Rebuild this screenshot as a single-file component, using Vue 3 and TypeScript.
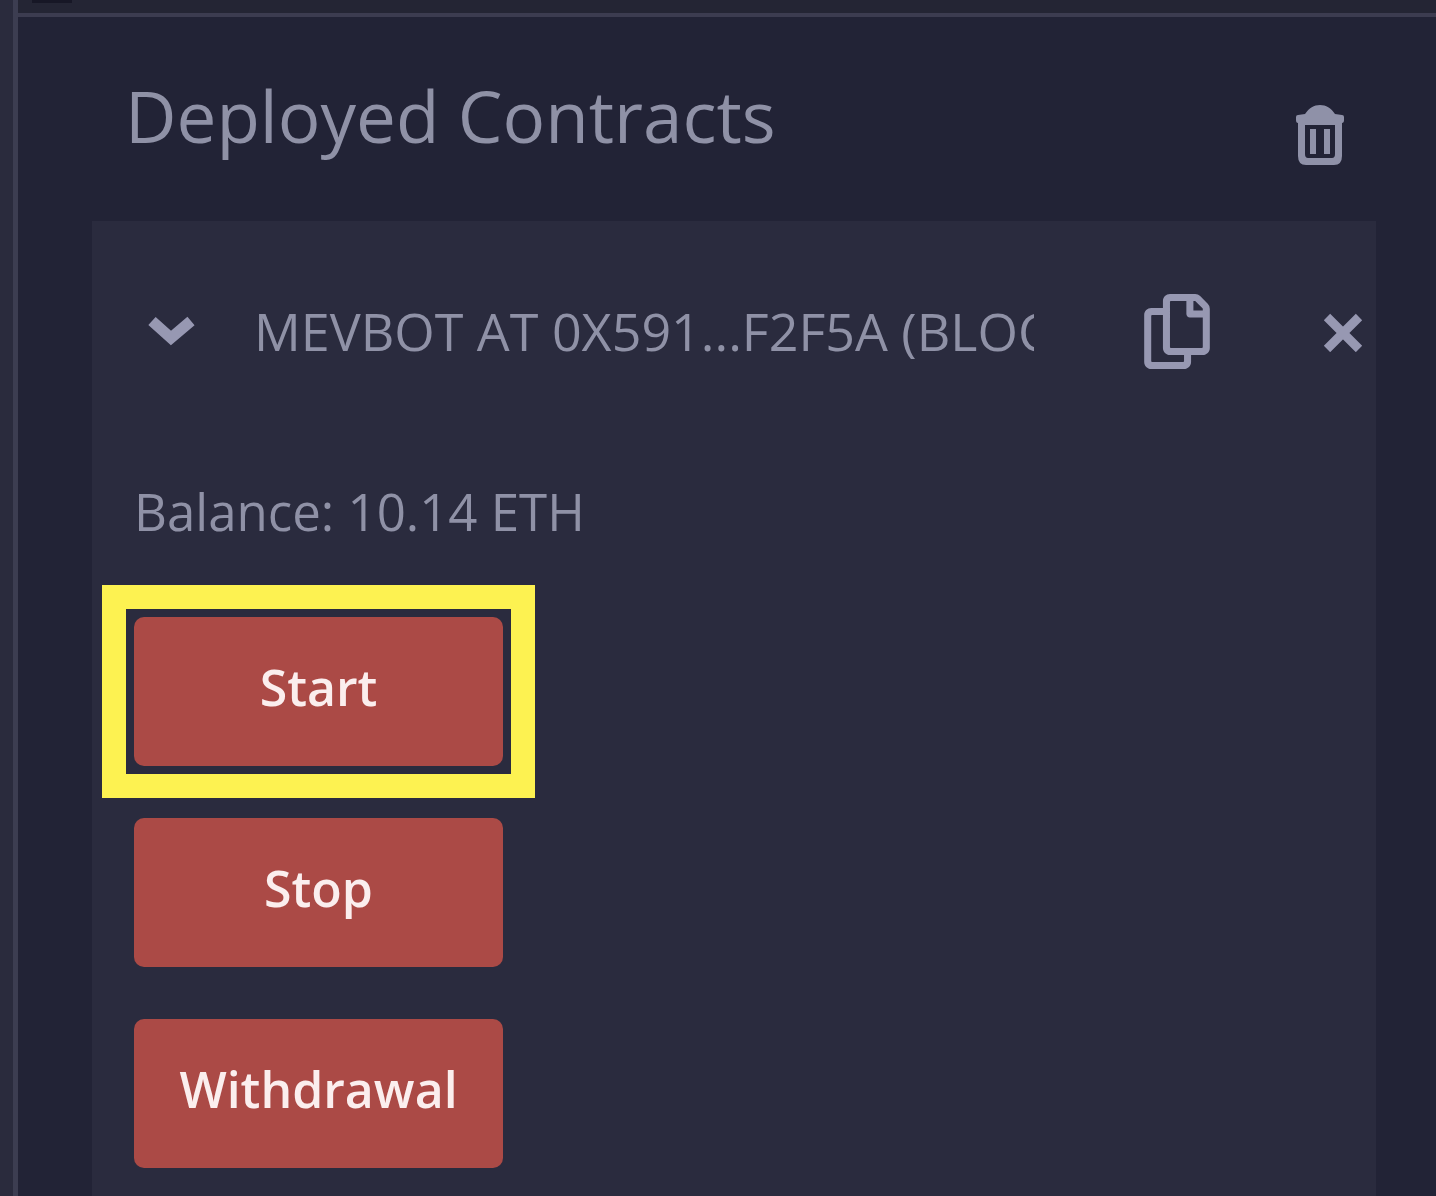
<script setup lang="ts">
import { ref } from 'vue'

interface Action {
  id: string
  label: string
  highlighted: boolean
}

const instanceName = 'MEVBOT AT 0X591...F2F5A (BLOCKCHAIN)'
const balance = ref('10.14')
const actions: Action[] = [
  { id: 'start', label: 'Start', highlighted: true },
  { id: 'stop', label: 'Stop', highlighted: false },
  { id: 'withdrawal', label: 'Withdrawal', highlighted: false },
]
</script>

<template>
  <div class="shell">
    <div class="rail"></div>
    <main class="panel">
      <div class="strip"><span class="strip-mark"></span></div>
      <header class="head">
        <h1 class="title">Deployed Contracts</h1>
        <button class="icon-btn trash" type="button" aria-label="Clear instances">
          <svg width="52" height="62" viewBox="0 0 52 62">
            <path
              fill="currentColor"
              fill-rule="evenodd"
              d="M11 9C15 3 20 0 26 0s11 3 15 9l7 1q2 0 2 2v3q0 3-2 3v33q0 9-8 9H12q-8 0-8-9V18q-2 0-2-3v-3q0-2 2-2zM11 20v29q0 4 3 4h24q3 0 3-4V20z"
            />
            <path fill="currentColor" d="M16 24h6v25h-6zM30 24h6v25h-6z" />
          </svg>
        </button>
      </header>
      <section class="card">
        <div class="instance">
          <button class="icon-btn" type="button" aria-label="Collapse">
            <svg width="50" height="34" viewBox="0 0 50 34">
              <path
                d="M6 7L25 24L45 7"
                fill="none"
                stroke="currentColor"
                stroke-width="11"
                stroke-linejoin="miter"
              />
            </svg>
          </button>
          <span class="name">{{ instanceName }}</span>
          <button class="icon-btn copy" type="button" aria-label="Copy address">
            <svg width="66" height="75" viewBox="0 0 448 512">
              <path
                fill="currentColor"
                d="M433.941 65.941l-51.882-51.882A48 48 0 0 0 348.118 0H176c-26.51 0-48 21.49-48 48v48H48c-26.51 0-48 21.49-48 48v320c0 26.51 21.49 48 48 48h224c26.51 0 48-21.49 48-48v-48h80c26.51 0 48-21.49 48-48V99.882a48 48 0 0 0-14.059-33.941zM266 464H54a6 6 0 0 1-6-6V150a6 6 0 0 1 6-6h74v224c0 26.51 21.49 48 48 48h96v42a6 6 0 0 1-6 6zm128-96H182a6 6 0 0 1-6-6V54a6 6 0 0 1 6-6h106v88c0 13.255 10.745 24 24 24h88v202a6 6 0 0 1-6 6zm6-256h-64V48h9.632c1.591 0 3.117.632 4.243 1.757l48.368 48.368a6 6 0 0 1 1.757 4.243V112z"
              />
            </svg>
          </button>
          <button class="icon-btn" type="button" aria-label="Remove instance">
            <svg width="42" height="42" viewBox="0 0 42 42">
              <path d="M5 7L37 39M37 7L5 39" fill="none" stroke="currentColor" stroke-width="9" />
            </svg>
          </button>
        </div>
        <p class="balance">Balance: {{ balance }} ETH</p>
        <div class="actions">
          <button
            v-for="action in actions"
            :key="action.id"
            type="button"
            class="action"
            :class="{ highlighted: action.highlighted }"
          >
            {{ action.label }}
          </button>
        </div>
      </section>
    </main>
  </div>
</template>

<style>
body {
  margin: 0;
  background: #222336;
}
</style>

<style scoped>
.shell {
  display: flex;
  min-height: 100vh;
  color: #8f91a6;
  background: #222336;
  font-family: 'Open Sans', 'Noto Sans', sans-serif;
}

.rail {
  flex: none;
  width: 13px;
  background: #2a2b3d;
  border-right: 5px solid #3c3d51;
}

.panel {
  display: flex;
  flex: 1;
  flex-direction: column;
  min-width: 0;
}

.strip {
  display: flex;
  align-items: flex-start;
  height: 13px;
  padding-left: 14px;
  background: #242534;
  border-bottom: 4px solid #3c3c50;
}

.strip-mark {
  width: 40px;
  height: 3px;
  background: #171726;
}

.head {
  display: flex;
  align-items: flex-start;
  justify-content: space-between;
  height: 204px;
  padding: 0 90px 0 107px;
}

.title {
  margin: 49px 0 0;
  font-size: 71px;
  font-weight: 400;
  line-height: 100px;
  white-space: nowrap;
}

.icon-btn {
  display: flex;
  flex: none;
  padding: 0;
  border: 0;
  color: #9798b2;
  background: none;
  cursor: pointer;
}

.trash {
  margin-top: 88px;
  color: #8f91a8;
}

.card {
  flex: 1;
  margin: 0 60px 0 74px;
  padding: 70px 12px 30px 42px;
  background: #2a2b3e;
}

.instance {
  display: flex;
  align-items: center;
  height: 80px;
  padding-left: 12px;
}

.name {
  flex: 1;
  min-width: 0;
  margin: 0 110px 0 58px;
  overflow: hidden;
  font-size: 52px;
  font-weight: 400;
  line-height: 80px;
  white-space: nowrap;
}

.copy {
  margin-right: 112px;
}

.balance {
  margin: 100px 0 66px;
  font-size: 51px;
  line-height: 80px;
}

.actions {
  display: flex;
  flex-direction: column;
  align-items: flex-start;
  gap: 52px;
}

.action {
  position: relative;
  width: 369px;
  height: 149px;
  padding: 0 0 10px;
  border: 0;
  border-radius: 10px;
  color: #fbeeee;
  background: #ab4a46;
  font-family: inherit;
  font-size: 50px;
  font-weight: 600;
  line-height: 64px;
  cursor: pointer;
}

.highlighted::after {
  position: absolute;
  inset: -32px;
  border: 24px solid #fdf251;
  content: '';
}
</style>
